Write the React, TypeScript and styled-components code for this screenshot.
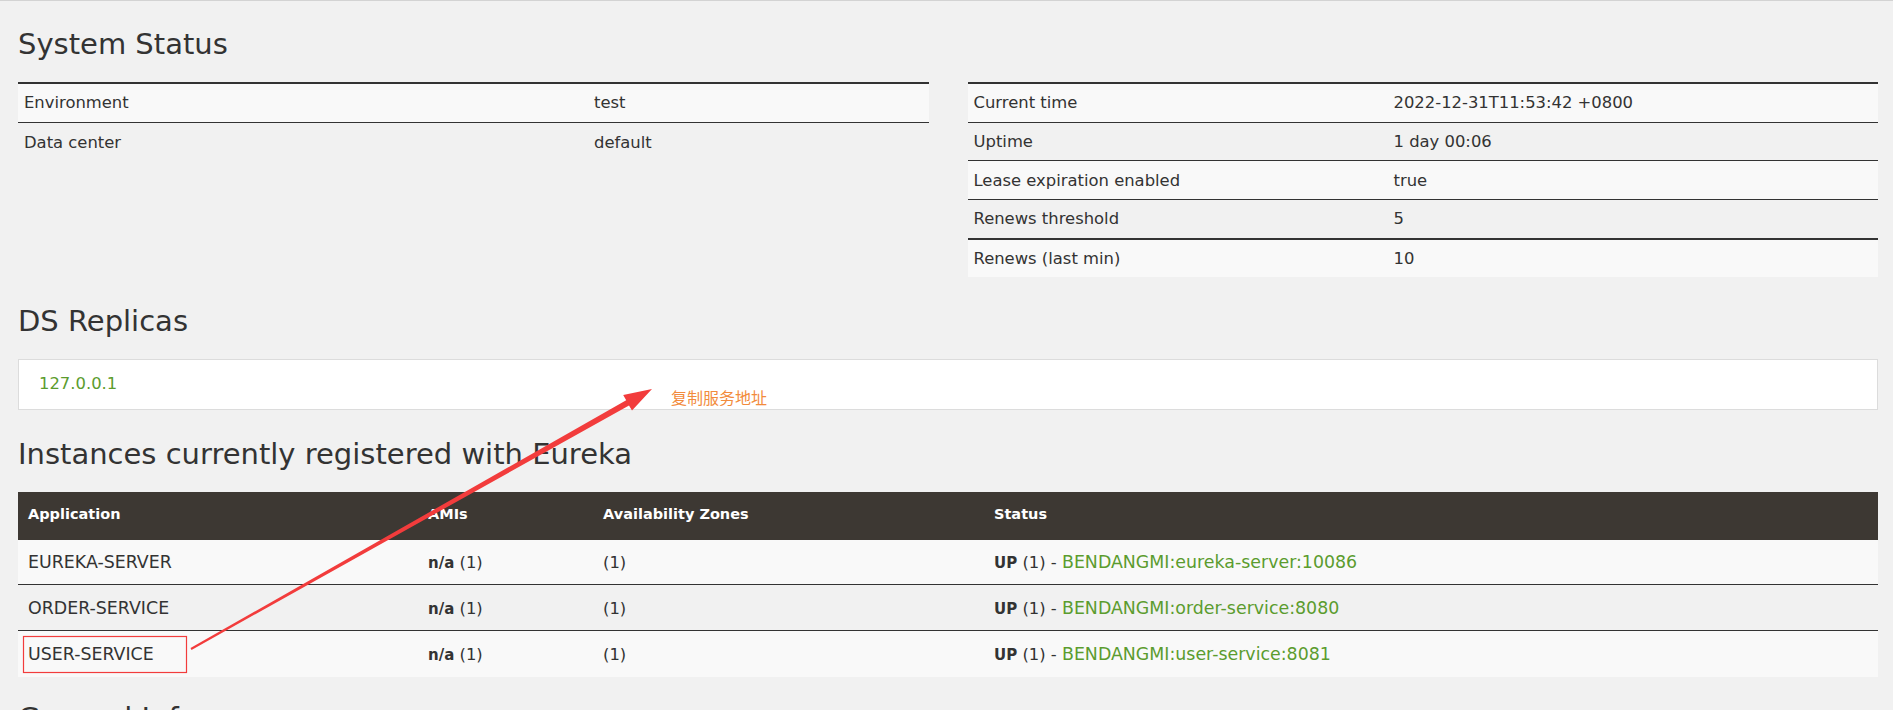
import React from "react";
import styled, { createGlobalStyle } from "styled-components";

const GlobalStyle = createGlobalStyle`
  html, body {
    margin: 0;
    padding: 0;
  }
  body {
    background: #f1f1f1;
    border-top: 1px solid #d3d3d3;
    color: #333;
    font-family: "DejaVu Sans", Verdana, sans-serif;
    font-size: 16.4px;
  }
`;

const Page = styled.div`
  position: relative;
  padding: 0 15px 0 18px;
  height: 709px;
  overflow: hidden;
`;

const Heading = styled.h2<{ $first?: boolean; $top?: number }>`
  margin: ${(p) => p.$top ?? (p.$first ? 26 : 27)}px 0 21px;
  font-size: 29px;
  font-weight: normal;
  line-height: 34px;
  color: #333;
`;

const StatusGrid = styled.div`
  display: grid;
  grid-template-columns: 1fr 1fr;
  column-gap: 39px;
  align-items: start;
`;

const InfoTable = styled.div`
  border-top: 2px solid #333;
`;

const InfoRow = styled.div<{ $label: number; $odd: boolean; $line: "none" | "thin" | "thick"; $h: number }>`
  display: grid;
  grid-template-columns: ${(p) => p.$label}px 1fr;
  align-items: center;
  box-sizing: border-box;
  height: ${(p) => p.$h}px;
  background: ${(p) => (p.$odd ? "#f9f9f9" : "transparent")};
  border-bottom: ${(p) =>
    p.$line === "none" ? "0" : p.$line === "thick" ? "2px solid #333" : "1px solid #333"};
`;

const InfoCell = styled.div`
  padding-left: 6px;
  white-space: nowrap;
`;

const ReplicaBox = styled.div`
  display: flex;
  align-items: center;
  box-sizing: border-box;
  height: 51px;
  padding: 0 20px 2px;
  background: #fff;
  border: 1px solid #dcdcdc;
`;

const Link = styled.a`
  color: #5b9c2e;
  text-decoration: none;
`;

const InstanceTable = styled.div`
  display: grid;
`;

const Cols = "400px 175px 391px 1fr";

const HeadRow = styled.div`
  display: grid;
  grid-template-columns: ${Cols};
  align-items: center;
  height: 48px;
  background: #3d3833;
  color: #fff;
  font-size: 14.5px;
  font-weight: bold;
  padding-bottom: 3px;
  box-sizing: border-box;
`;

const BodyRow = styled.div<{ $odd: boolean; $last: boolean }>`
  display: grid;
  grid-template-columns: ${Cols};
  align-items: center;
  box-sizing: border-box;
  height: 45.7px;
  font-size: 17.4px;
  background: ${(p) => (p.$odd ? "#f9f9f9" : "transparent")};
  border-bottom: ${(p) => (p.$last ? "0" : "1px solid #333")};
`;

const Cell = styled.div`
  padding: 0 10px;
  white-space: nowrap;
`;

const Bold = styled.b`
  font-size: 15px;
`;

const Prefix = styled.span`
  font-size: 16.4px;
`;

const Overlay = styled.svg`
  position: absolute;
  left: 0;
  top: 0;
  pointer-events: none;
`;

const Note = styled.span`
  position: absolute;
  left: 671px;
  top: 387px;
  font-family: "Noto Sans CJK SC", sans-serif;
  font-size: 16px;
  line-height: 18px;
  color: #f28b3c;
`;

type Pair = [string, string];

const leftInfo: Pair[] = [
  ["Environment", "test"],
  ["Data center", "default"],
];

const rightInfo: Pair[] = [
  ["Current time", "2022-12-31T11:53:42 +0800"],
  ["Uptime", "1 day 00:06"],
  ["Lease expiration enabled", "true"],
  ["Renews threshold", "5"],
  ["Renews (last min)", "10"],
];

const instances = [
  { app: "EUREKA-SERVER", id: "BENDANGMI:eureka-server:10086" },
  { app: "ORDER-SERVICE", id: "BENDANGMI:order-service:8080" },
  { app: "USER-SERVICE", id: "BENDANGMI:user-service:8081" },
];

function Info({ rows, label, thickBeforeLast }: { rows: Pair[]; label: number; thickBeforeLast?: boolean }) {
  return (
    <InfoTable>
      {rows.map(([k, v], i) => {
        const last = i === rows.length - 1;
        const thick = !!thickBeforeLast && i === rows.length - 2;
        return (
          <InfoRow
            key={k}
            $label={label}
            $odd={i % 2 === 0}
            $line={last ? "none" : thick ? "thick" : "thin"}
            $h={thick ? 39.7 : last && thickBeforeLast ? 37 : 38.7}
          >
            <InfoCell>{k}</InfoCell>
            <InfoCell>{v}</InfoCell>
          </InfoRow>
        );
      })}
    </InfoTable>
  );
}

export default function App() {
  return (
    <>
      <GlobalStyle />
      <Page>
        <Heading $first>System Status</Heading>
        <StatusGrid>
          <Info rows={leftInfo} label={570} />
          <Info rows={rightInfo} label={420} thickBeforeLast />
        </StatusGrid>

        <Heading>DS Replicas</Heading>
        <ReplicaBox>
          <Link href="#">127.0.0.1</Link>
        </ReplicaBox>

        <Heading>Instances currently registered with Eureka</Heading>
        <InstanceTable>
          <HeadRow>
            <Cell>Application</Cell>
            <Cell>AMIs</Cell>
            <Cell>Availability Zones</Cell>
            <Cell>Status</Cell>
          </HeadRow>
          {instances.map((r, i) => (
            <BodyRow key={r.app} $odd={i % 2 === 0} $last={i === instances.length - 1}>
              <Cell>{r.app}</Cell>
              <Cell>
                <Bold>n/a</Bold>
                <Prefix> (1)</Prefix>
              </Cell>
              <Cell>
                <Prefix>(1)</Prefix>
              </Cell>
              <Cell>
                <Bold>UP</Bold>
                <Prefix> (1) - </Prefix>
                <Link href="#">{r.id}</Link>
              </Cell>
            </BodyRow>
          ))}
        </InstanceTable>

        <Heading $top={24}>General Info</Heading>

        <Note>复制服务地址</Note>
        <Overlay width="1893" height="709" viewBox="0 -1 1893 709">
          <rect x="23.5" y="634.5" width="163" height="36" fill="none" stroke="#f23c3c" strokeWidth="1.2" />
          <polygon
            fill="#f23c3c"
            points="191.5,647.9 190.5,646.1 626.2,398.2 623.2,393 652,387 632,408.6 629,403.4"
          />
        </Overlay>
      </Page>
    </>
  );
}
